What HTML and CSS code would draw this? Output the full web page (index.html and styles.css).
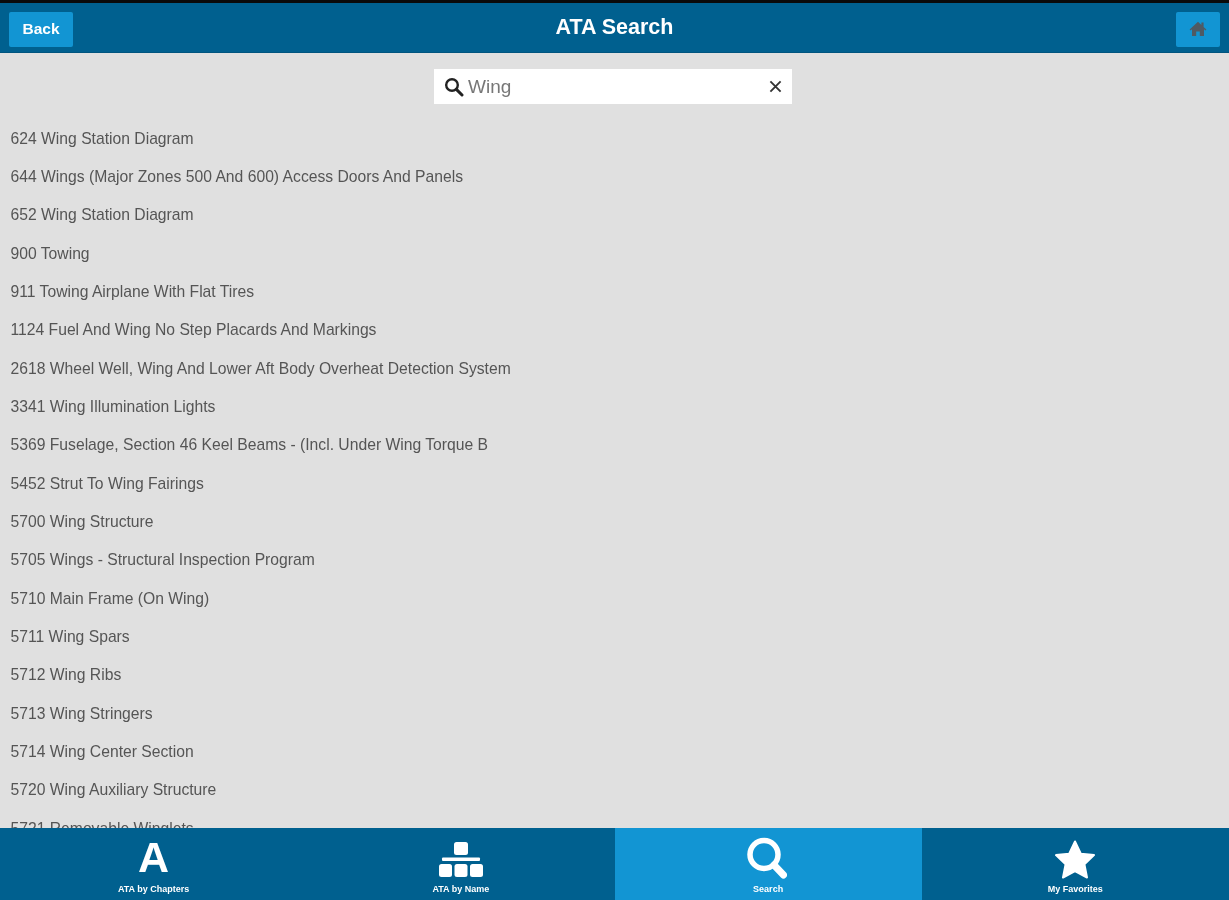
FILE: index.html
```html
<!DOCTYPE html>
<html lang="en">
<head>
<meta charset="utf-8">
<title>ATA Search</title>
<link rel="stylesheet" href="styles.css">
</head>
<body>
<div class="app">
  <header class="topbar">
    <a class="btn btn-back">Back</a>
    <h1 class="title">ATA Search</h1>
    <a class="btn btn-home" aria-label="Home">
      <svg class="home-icon" viewBox="0 0 18 16"><path d="M9 .8 0.6 8.4 1.6 9.4 3 8.2V15H7.2V10.6H10.8V15H15V8.2L16.4 9.4 17.4 8.4 14.6 5.9V1.6H12.4V3.9Z"/></svg>
    </a>
  </header>
  <div class="searchwrap">
    <div class="searchbox">
      <svg class="s-icon" viewBox="0 0 20 20"><circle cx="8" cy="8" r="5.8" fill="none" stroke="#222" stroke-width="2.4"/><path d="M12.4 12.4 18 18" stroke="#222" stroke-width="3" stroke-linecap="round"/></svg>
      <span class="s-text">Wing</span>
      <svg class="s-clear" viewBox="0 0 14 14"><path d="M1.5 1.5 12.5 12.5M12.5 1.5 1.5 12.5" stroke="#333" stroke-width="2"/></svg>
    </div>
  </div>
  <ul class="list">
    <li>624 Wing Station Diagram</li>
    <li>644 Wings (Major Zones 500 And 600) Access Doors And Panels</li>
    <li>652 Wing Station Diagram</li>
    <li>900 Towing</li>
    <li>911 Towing Airplane With Flat Tires</li>
    <li>1124 Fuel And Wing No Step Placards And Markings</li>
    <li>2618 Wheel Well, Wing And Lower Aft Body Overheat Detection System</li>
    <li>3341 Wing Illumination Lights</li>
    <li>5369 Fuselage, Section 46 Keel Beams - (Incl. Under Wing Torque B</li>
    <li>5452 Strut To Wing Fairings</li>
    <li>5700 Wing Structure</li>
    <li>5705 Wings - Structural Inspection Program</li>
    <li>5710 Main Frame (On Wing)</li>
    <li>5711 Wing Spars</li>
    <li>5712 Wing Ribs</li>
    <li>5713 Wing Stringers</li>
    <li>5714 Wing Center Section</li>
    <li>5720 Wing Auxiliary Structure</li>
    <li>5721 Removable Winglets</li>
  </ul>
  <nav class="tabbar">
    <a class="tab">
      <span class="tab-a">A</span>
      <span class="tab-label">ATA by Chapters</span>
    </a>
    <a class="tab">
      <svg class="tab-icon tab-icon-org" viewBox="0 0 44 36"><rect x="15" y="0" width="14" height="13" rx="2.5"/><rect x="3" y="15.5" width="38" height="3.5" rx="1"/><rect x="0" y="22" width="13" height="13" rx="2.5"/><rect x="15.5" y="22" width="13" height="13" rx="2.5"/><rect x="31" y="22" width="13" height="13" rx="2.5"/></svg>
      <span class="tab-label">ATA by Name</span>
    </a>
    <a class="tab tab-active">
      <svg class="tab-icon" viewBox="0 0 44 42"><circle cx="18" cy="16.5" r="14" fill="none" stroke="#fff" stroke-width="5.5"/><path d="M28 27 37.5 37" stroke="#fff" stroke-width="7" stroke-linecap="round"/></svg>
      <span class="tab-label">Search</span>
    </a>
    <a class="tab">
      <svg class="tab-icon" viewBox="0 0 44 42"><path d="M22 3.5 27.8 15.7 41 17.1 31.4 26.3 34 39.5 22 33.1 10 39.5 12.6 26.3 3 17.1 16.2 15.7Z" stroke="#fff" stroke-width="2" stroke-linejoin="round"/></svg>
      <span class="tab-label">My Favorites</span>
    </a>
  </nav>
</div>
</body>
</html>
```
FILE: styles.css
```css
* { box-sizing: border-box; }
html, body { margin: 0; padding: 0; }
body { font-family: "Liberation Sans", Arial, sans-serif; background: #e0e0e0; }
.app { display: flex; flex-direction: column; height: 900px; overflow: hidden; }

.topbar {
  flex: none; height: 53px; display: grid; grid-template-columns: 1fr auto 1fr; align-items: center;
  background: #00608f; border-top: 3px solid #0a0a0a; border-bottom: 1px solid #00557f;
  padding: 0 9px;
}
.btn { display: flex; align-items: center; justify-content: center; height: 35px; background: #1295d3; border-radius: 2px; color: #fff; margin-top: 3px; filter: blur(0.4px); }
.btn-back { width: 64px; font-size: 15.5px; font-weight: 700; }
.btn-home { width: 44px; justify-self: end; }
.home-icon { width: 18px; height: 16px; fill: #4f5a63; }
.title { margin: 0; color: #fff; font-size: 21.5px; font-weight: 700; filter: blur(0.4px); }

.searchwrap { flex: none; display: flex; justify-content: center; padding: 16px 3px 0 0; }
.searchbox { width: 358px; height: 35px; background: #fff; display: flex; align-items: center; padding: 0 10px; }
.s-icon { width: 20px; height: 20px; flex: none; filter: blur(0.3px); }
.s-text { flex: 1; margin-left: 4px; font-size: 19px; color: #777; filter: blur(0.5px); }
.s-clear { width: 13px; height: 13px; flex: none; filter: blur(0.3px); }

.list { flex: 1; min-height: 0; overflow: hidden; list-style: none; margin: 0; padding: 15.6px 0 0 10.5px; }
.list li { height: 38.35px; line-height: 38.35px; font-size: 15.7px; color: #555; white-space: nowrap; filter: blur(0.55px); }

.tabbar { flex: none; height: 72px; display: grid; grid-template-columns: repeat(4, 1fr); background: #00608f; }
.tab { display: flex; flex-direction: column; align-items: center; justify-content: flex-end; padding-bottom: 4px; color: #fff; }
.tab-active { background: #1295d3; }
.tab-a { font-size: 43px; line-height: 42px; font-weight: 700; height: 42px; margin-bottom: 2px; filter: blur(0.4px); }
.tab-icon { width: 44px; height: 42px; fill: #fff; filter: blur(0.4px); overflow: visible; }
.tab-icon-org { height: 36px; margin: 5px 0 2px; }
.tab-label { font-size: 9px; line-height: 14px; font-weight: 700; margin-top: 2px; filter: blur(0.5px); }
```
